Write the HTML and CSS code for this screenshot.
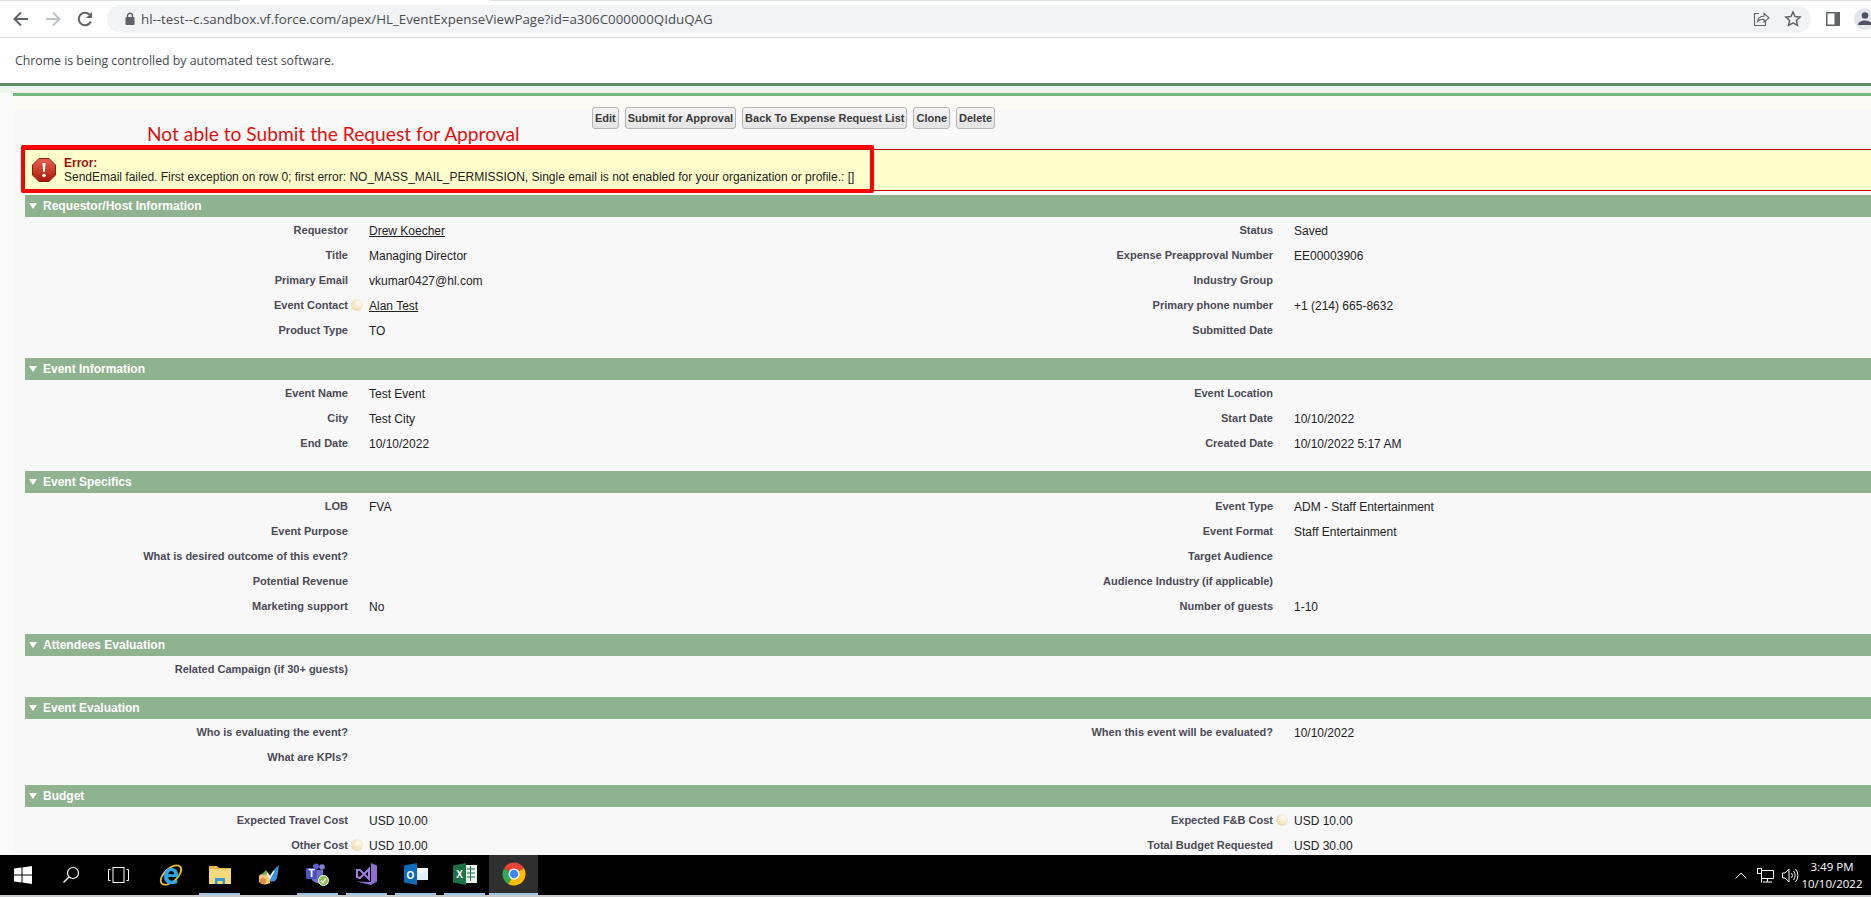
FILE: index.html
```html
<!DOCTYPE html>
<html lang="en">
<head>
    <meta charset="UTF-8">
    <title>HL_EventExpenseViewPage</title>
    <link rel="stylesheet" href="styles.css">
</head>
<body>
    <!-- browser toolbar -->
    <div class="toolbar">
        <div class="nav-btn">
            <svg width="18" height="18" viewBox="0 0 18 18"><path d="M16 9H3M9 2.5L2.5 9 9 15.500" fill="none" stroke="#5f6368" stroke-width="2"/></svg>
        </div>
        <div class="nav-btn">
            <svg width="18" height="18" viewBox="0 0 18 18"><path d="M2 9h13M9 2.500L15.500 9 9 15.500" fill="none" stroke="#bdc1c6" stroke-width="2"/></svg>
        </div>
        <div class="nav-btn">
            <svg width="18" height="18" viewBox="0 0 18 18"><path d="M14.800 11.500A6.300 6.300 0 1 1 13.500 4.500" fill="none" stroke="#5f6368" stroke-width="2"/><path d="M16 2v6h-6z" fill="#5f6368"/></svg>
        </div>
        <div class="omnibox">
            <svg class="lock" width="10" height="13" viewBox="0 0 10 13"><path d="M2.500 6V3.800a2.500 2.500 0 0 1 5 0V6" fill="none" stroke="#5f6368" stroke-width="1.400"/><rect x="0.500" y="5" width="9" height="8" rx="1" fill="#5f6368"/></svg>
            <span class="url">hl--test--c.sandbox.vf.force.com/apex/HL_EventExpenseViewPage?id=a306C000000QIduQAG</span>
            <svg class="omni-icon" width="18" height="18" viewBox="0 0 18 18"><path d="M7 3.500H2.500v12h11V11" fill="none" stroke="#5f6368" stroke-width="1.100"/><path d="M5.500 11.500c.5-3.500 3-5.300 6.500-5.300V3.500l5 4.300-5 4.200V9.300c-2.800 0-5 .5-6.500 2.200z" fill="none" stroke="#5f6368" stroke-width="1.100"/></svg>
            <svg class="omni-icon" width="18" height="18" viewBox="0 0 18 18"><path d="M9 2l2.100 4.600 5 .5-3.700 3.300 1 4.900L9 12.800l-4.400 2.500 1-4.900L1.900 7.100l5-.5z" fill="none" stroke="#5f6368" stroke-width="1.500"/></svg>
        </div>
        <div class="nav-btn panel-btn">
            <svg width="14" height="14" viewBox="0 0 14 14"><rect width="14" height="14" fill="#5f6368"/><rect x="1.500" y="1.500" width="7" height="11" fill="#fff"/></svg>
        </div>
        <div class="avatar">
            <svg width="22" height="22" viewBox="0 0 22 22"><circle cx="11" cy="7.500" r="3.300" fill="#4d5362"/><path d="M4 17c0-3 3.500-4.500 7-4.500s7 1.500 7 4.500z" fill="#4d5362"/></svg>
        </div>
    </div>

    <div class="infobar">Chrome is being controlled by automated test software.</div>

    <div class="page">
        <div class="top-line"></div>
        <div class="content">
            <div class="inner-line"></div>

            <div class="btn-row">
                <button class="btn">Edit</button>
                <button class="btn">Submit for Approval</button>
                <button class="btn">Back To Expense Request List</button>
                <button class="btn">Clone</button>
                <button class="btn">Delete</button>
            </div>

            <div class="error-msg">
                <svg class="error-icon" width="24" height="24" viewBox="0 0 24 24">
                    <defs>
                        <linearGradient id="errGrad" x1="0" y1="0" x2="0" y2="1">
                            <stop offset="0" stop-color="#e8604c"/>
                            <stop offset="1" stop-color="#a81806"/>
                        </linearGradient>
                    </defs>
                    <path d="M7 0.500h10l6.500 6.500v10L17 23.500H7L0.500 17V7z" fill="url(#errGrad)" stroke="#8f1a0c"/>
                    <path d="M10.500 5h3l-.7 9h-1.600z" fill="#fff"/>
                    <circle cx="12" cy="17.500" r="1.700" fill="#fff"/>
                </svg>
                <div>
                    <div class="error-title">Error:</div>
                    <div class="error-text">SendEmail failed. First exception on row 0; first error: NO_MASS_MAIL_PERMISSION, Single email is not enabled for your organization or profile.: []</div>
                </div>
            </div>

            <div class="section">
                <h3 class="section-head">Requestor/Host Information</h3>
                <div class="fields">
                    <div class="lbl">Requestor</div><div class="hlp"></div><div class="val"><a class="link">Drew Koecher</a></div>
                    <div class="lbl">Status</div><div class="hlp"></div><div class="val">Saved</div>
                    <div class="lbl">Title</div><div class="hlp"></div><div class="val">Managing Director</div>
                    <div class="lbl">Expense Preapproval Number</div><div class="hlp"></div><div class="val">EE00003906</div>
                    <div class="lbl">Primary Email</div><div class="hlp"></div><div class="val">vkumar0427@hl.com</div>
                    <div class="lbl">Industry Group</div><div class="hlp"></div><div class="val"></div>
                    <div class="lbl">Event Contact</div><div class="hlp"><span class="orb"></span></div><div class="val"><a class="link">Alan Test</a></div>
                    <div class="lbl">Primary phone number</div><div class="hlp"></div><div class="val">+1 (214) 665-8632</div>
                    <div class="lbl">Product Type</div><div class="hlp"></div><div class="val">TO</div>
                    <div class="lbl">Submitted Date</div><div class="hlp"></div><div class="val"></div>
                </div>
            </div>

            <div class="section">
                <h3 class="section-head">Event Information</h3>
                <div class="fields">
                    <div class="lbl">Event Name</div><div class="hlp"></div><div class="val">Test Event</div>
                    <div class="lbl">Event Location</div><div class="hlp"></div><div class="val"></div>
                    <div class="lbl">City</div><div class="hlp"></div><div class="val">Test City</div>
                    <div class="lbl">Start Date</div><div class="hlp"></div><div class="val">10/10/2022</div>
                    <div class="lbl">End Date</div><div class="hlp"></div><div class="val">10/10/2022</div>
                    <div class="lbl">Created Date</div><div class="hlp"></div><div class="val">10/10/2022 5:17 AM</div>
                </div>
            </div>

            <div class="section">
                <h3 class="section-head">Event Specifics</h3>
                <div class="fields">
                    <div class="lbl">LOB</div><div class="hlp"></div><div class="val">FVA</div>
                    <div class="lbl">Event Type</div><div class="hlp"></div><div class="val">ADM - Staff Entertainment</div>
                    <div class="lbl">Event Purpose</div><div class="hlp"></div><div class="val"></div>
                    <div class="lbl">Event Format</div><div class="hlp"></div><div class="val">Staff Entertainment</div>
                    <div class="lbl">What is desired outcome of this event?</div><div class="hlp"></div><div class="val"></div>
                    <div class="lbl">Target Audience</div><div class="hlp"></div><div class="val"></div>
                    <div class="lbl">Potential Revenue</div><div class="hlp"></div><div class="val"></div>
                    <div class="lbl">Audience Industry (if applicable)</div><div class="hlp"></div><div class="val"></div>
                    <div class="lbl">Marketing support</div><div class="hlp"></div><div class="val">No</div>
                    <div class="lbl">Number of guests</div><div class="hlp"></div><div class="val">1-10</div>
                </div>
            </div>

            <div class="section">
                <h3 class="section-head">Attendees Evaluation</h3>
                <div class="fields">
                    <div class="lbl">Related Campaign (if 30+ guests)</div><div class="hlp"></div><div class="val"></div>
                </div>
            </div>

            <div class="section">
                <h3 class="section-head">Event Evaluation</h3>
                <div class="fields">
                    <div class="lbl">Who is evaluating the event?</div><div class="hlp"></div><div class="val"></div>
                    <div class="lbl">When this event will be evaluated?</div><div class="hlp"></div><div class="val">10/10/2022</div>
                    <div class="lbl">What are KPIs?</div><div class="hlp"></div><div class="val"></div>
                </div>
            </div>

            <div class="section">
                <h3 class="section-head">Budget</h3>
                <div class="fields">
                    <div class="lbl">Expected Travel Cost</div><div class="hlp"></div><div class="val">USD 10.00</div>
                    <div class="lbl">Expected F&amp;B Cost</div><div class="hlp"><span class="orb"></span></div><div class="val">USD 10.00</div>
                    <div class="lbl">Other Cost</div><div class="hlp"><span class="orb"></span></div><div class="val">USD 10.00</div>
                    <div class="lbl">Total Budget Requested</div><div class="hlp"></div><div class="val">USD 30.00</div>
                </div>
            </div>
        </div>

        <!-- annotation drawn on top of the screenshot -->
        <div class="note">Not able to Submit the Request for Approval</div>
        <div class="note-box"></div>
    </div>

    <div class="taskbar">
        <div class="task sys">
            <svg width="18" height="18" viewBox="0 0 18 18"><path d="M0 2.600L7.500 1.500v7H0zM8.500 1.400L18 0v8.500H8.500zM0 9.500h7.500v7L0 15.400zM8.500 9.500H18V18l-9.500-1.400z" fill="#fff"/></svg>
        </div>
        <div class="task sys">
            <svg width="18" height="18" viewBox="0 0 18 18"><circle cx="11" cy="7" r="5.500" fill="none" stroke="#fff" stroke-width="1.200"/><path d="M7 11L1.500 16.500" stroke="#fff" stroke-width="1.400"/></svg>
        </div>
        <div class="task sys">
            <svg width="21" height="16" viewBox="0 0 21 16"><rect x="5" y="0.500" width="11" height="15" fill="none" stroke="#fff"/><path d="M2.500 2.500H.5v11h2M18.500 2.500h2v11h-2" fill="none" stroke="#fff"/></svg>
        </div>
        <div class="task first-app">
            <svg width="40" height="40" viewBox="0 0 40 40"><ellipse cx="20" cy="20" rx="12.500" ry="6.500" transform="rotate(-42 20 20)" fill="none" stroke="#e8c13c" stroke-width="1.800"/><text x="20" y="29" text-anchor="middle" class="ie-e">e</text></svg>
        </div>
        <div class="task open">
            <svg width="22" height="20" viewBox="0 0 22 20"><path d="M0 2h8l2 2h12v4H0z" fill="#e8b93e"/><rect y="5" width="22" height="15" fill="#f6d77c"/><path d="M6 20v-6h10v6h-2.500v-3h-5v3z" fill="#2f9bd6"/></svg>
        </div>
        <div class="task">
            <svg width="22" height="22" viewBox="0 0 22 22"><path d="M1 12c2-3 8-3 11-1v8c-3 2-8 2-11-1z" fill="#efc877"/><path d="M3 11l5-5 3 4z" fill="#6fae3f"/><path d="M12 11c2-3 5-7 9-10-1 5-1 11-3 15-2 2-5 2-6 1z" fill="#3d8fd8"/><path d="M9 9l3 5 4-7" fill="none" stroke="#fff" stroke-width="1.400"/><circle cx="5" cy="17" r="3" fill="#e58a3a"/></svg>
        </div>
        <div class="task open">
            <svg width="23" height="23" viewBox="0 0 23 23"><circle cx="16" cy="4" r="2.800" fill="#7b83d1"/><circle cx="10" cy="3.500" r="3" fill="#5b5fc7"/><path d="M5 7h12v9c0 3-3 5-6 4-3-.5-6-3-6-6z" fill="#6c70c9"/><rect y="5" width="11" height="11" rx="1" fill="#4b53bc"/><text x="5.500" y="14" text-anchor="middle" class="tile-letter">T</text><circle cx="17.500" cy="17.500" r="5" fill="#8cbf4d" stroke="#fff"/><path d="M15 17.500l2 2 3-4" fill="none" stroke="#fff" stroke-width="1.300"/></svg>
        </div>
        <div class="task open">
            <svg width="24" height="24" viewBox="0 0 24 24"><path d="M16 1l6 2.500v16L16 23 1 19.500 16 20z" fill="#8f6fd1"/><path d="M2 8v7l3 1 9-9v10L5 8z" fill="none" stroke="#9e80dc" stroke-width="2"/></svg>
        </div>
        <div class="task open">
            <svg width="24" height="22" viewBox="0 0 24 22"><rect x="10" y="5" width="14" height="12" fill="#dff0fb"/><path d="M10 5h14l-7 6z" fill="#fff"/><path d="M0 2.500L13 0v22L0 19.500z" fill="#0f6cbd"/><text x="6.500" y="15.500" text-anchor="middle" class="tile-letter">O</text></svg>
        </div>
        <div class="task open">
            <svg width="24" height="22" viewBox="0 0 24 22"><rect x="11" y="2" width="13" height="18" fill="#e7f2ea"/><path d="M14 6h8M14 10h8M14 14h8M17.500 3v15" stroke="#217346"/><path d="M0 2.500L13 0v22L0 19.500z" fill="#1e7145"/><text x="6.500" y="15" text-anchor="middle" class="tile-letter">X</text></svg>
        </div>
        <div class="task open active">
            <svg width="24" height="24" viewBox="0 0 48 48">
                <path d="M24 24L12.500 44A23 23 0 0 1 4.100 12.500z" fill="#34a853"/>
                <path d="M24 1a23 23 0 0 1 20 11.500L24 24 4.100 12.500A23 23 0 0 1 24 1z" fill="#ea4335"/>
                <path d="M44 12.500A23 23 0 0 1 12.500 44L24 24z" fill="#fbbc04"/>
                <circle cx="24" cy="24" r="11" fill="#fff"/>
                <circle cx="24" cy="24" r="8.500" fill="#4285f4"/>
            </svg>
        </div>
        <div class="tray">
            <svg width="12" height="7" viewBox="0 0 12 7"><path d="M.5 6.500L6 1l5.500 5.500" fill="none" stroke="#fff"/></svg>
            <svg class="tray-net" width="17" height="15" viewBox="0 0 17 15"><path d="M4.500 2.500h12v8h-12M10.500 10.500v3.500M6 14h9M4.500 5.500v9" fill="none" stroke="#fff"/><rect x="0.500" y="0.500" width="4" height="5" fill="#000" stroke="#fff"/></svg>
            <svg class="tray-vol" width="17" height="15" viewBox="0 0 17 15"><path d="M.5 5h2.500l4-4v13l-4-4H.5z" fill="none" stroke="#fff"/><path d="M9.500 5a4 4 0 0 1 0 5M11.500 3a7 7 0 0 1 0 9M13.500 1a10 10 0 0 1 0 13" fill="none" stroke="#fff"/></svg>
            <div class="clock">
                <div>3:49 PM</div>
                <div>10/10/2022</div>
            </div>
        </div>
    </div>
    <div class="bottom-strip"></div>
</body>
</html>
```

FILE: styles.css
```css
html, body {
    margin: 0;
    height: 100%;
    overflow: hidden;
}
body {
    width: 1871px;
    height: 897px;
    display: flex;
    flex-direction: column;
    font-family: "Liberation Sans", Arial, sans-serif;
    font-size: 12px;
    color: #222;
    background-color: #fff;
}

/* browser chrome */
.toolbar {
    height: 37px;
    flex-shrink: 0;
    display: flex;
    align-items: center;
    padding-left: 5px;
    border-bottom: 1px solid #d8d9db;
    background: linear-gradient(to right, #dee1e6 240px, #fff 240px, #fff 490px, #dee1e6 490px) top / 100% 1px no-repeat #fff;
    overflow: hidden;
}
.nav-btn {
    width: 32px;
    height: 28px;
    flex-shrink: 0;
    display: flex;
    align-items: center;
    justify-content: center;
}
.omnibox {
    flex: 1;
    height: 28px;
    margin-left: 6px;
    padding: 0 9px 0 18px;
    display: flex;
    align-items: center;
    background-color: #f1f3f4;
    border-radius: 14px;
}
.url {
    flex: 1;
    margin-left: 6px;
    font-family: "Open Sans", sans-serif;
    font-size: 13.330px;
    color: #4a4d52;
    white-space: nowrap;
}
.omni-icon {
    margin-left: 14px;
}
.panel-btn {
    margin-left: 6px;
}
.avatar {
    width: 22px;
    height: 22px;
    margin-left: 5px;
    margin-right: -5px;
    flex-shrink: 0;
    border-radius: 50%;
    background-color: #e3e5ea;
}
.infobar {
    height: 45px;
    flex-shrink: 0;
    padding-left: 15px;
    box-sizing: border-box;
    line-height: 45px;
    font-family: "Open Sans", sans-serif;
    font-size: 12.300px;
    color: #45484c;
}

/* salesforce page */
.page {
    flex: 1;
    position: relative;
    overflow: hidden;
    background: linear-gradient(#edf5ed 10px, #fafafa 10px);
}
.top-line {
    height: 3px;
    background-color: #5f8a63;
}
.content {
    margin-left: 13px;
    padding-top: 7px;
    background: linear-gradient(#edf5ed 10px, #fdf9f3 10px, #fdf9f3 24px, #f8f8f8 24px);
}
.inner-line {
    height: 3px;
    background-color: #74b77c;
}
.btn-row {
    display: flex;
    gap: 6px;
    margin: 11px 0 0 579px;
}
.btn {
    height: 22px;
    padding: 0 2px;
    border: 1px solid #b5b5b5;
    border-radius: 3px;
    background: linear-gradient(#f4f4f4, #e4e4e4);
    font-family: "Liberation Sans", Arial, sans-serif;
    font-size: 11px;
    font-weight: bold;
    color: #3a3a3a;
}
.error-msg {
    display: flex;
    align-items: center;
    height: 42px;
    margin: 20px 0 4px 12px;
    box-sizing: border-box;
    padding-left: 7px;
    border-top: 1px solid #c00;
    border-bottom: 1px solid #c00;
    background-color: #ffffcc;
}
.error-icon {
    margin-right: 8px;
    flex-shrink: 0;
}
.error-title {
    font-weight: bold;
    color: #a01010;
}
.error-text {
    line-height: 15px;
    color: #222;
}
.section {
    margin: 0 0 16px 12px;
}
.section-head {
    height: 22px;
    margin: 0;
    padding-left: 18px;
    position: relative;
    line-height: 22px;
    font-size: 12px;
    font-weight: bold;
    color: #fff;
    background-color: #8fb28f;
}
.section-head::before {
    content: "";
    position: absolute;
    left: 4px;
    top: 8px;
    border-left: 4px solid transparent;
    border-right: 4px solid transparent;
    border-top: 6px solid #fff;
}
.fields {
    display: grid;
    grid-template-columns: 323px 21px 330px 574px 21px 1fr;
    grid-auto-rows: 25px;
    align-items: center;
}
.lbl {
    text-align: right;
    font-size: 11px;
    font-weight: bold;
    color: #4a4a56;
}
.hlp {
    display: flex;
    align-items: center;
    padding-left: 3px;
}
.val {
    padding-top: 2px;
    color: #222;
}
.link {
    color: #222;
    text-decoration: underline;
}
.orb {
    width: 12px;
    height: 12px;
    border-radius: 50%;
    background: radial-gradient(circle at 60% 35%, #fffdf5, #efdcae 70%, #e6e0d0);
}

/* annotation */
.note {
    position: absolute;
    left: 147px;
    top: 39px;
    font-family: "Lato", sans-serif;
    font-size: 19.200px;
    color: #e01010;
    white-space: nowrap;
}
.note-box {
    position: absolute;
    left: 21px;
    top: 62px;
    width: 853px;
    height: 48px;
    box-sizing: border-box;
    border: 4px solid #f00;
    border-radius: 2px;
}

/* windows taskbar */
.taskbar {
    height: 40px;
    flex-shrink: 0;
    display: flex;
    background-color: #000;
}
.task {
    width: 49px;
    display: flex;
    align-items: center;
    justify-content: center;
    box-sizing: border-box;
}
.sys {
    width: 48px;
    padding-right: 3px;
}
.first-app {
    margin-left: 2px;
}
.open {
    border-bottom: 2px solid #9dc4e0;
    margin: 0 4px;
    width: 41px;
}
.active {
    width: 49px;
    margin: 0;
    background-color: #2f2f2f;
}
.ie-e {
    font-family: "Open Sans", sans-serif;
    font-size: 28px;
    font-weight: bold;
    fill: #2ea6e6;
}
.tile-letter {
    font-family: "Liberation Sans", sans-serif;
    font-size: 10px;
    font-weight: bold;
    fill: #fff;
}
.tray {
    margin-left: auto;
    display: flex;
    align-items: center;
    padding-right: 6px;
}
.tray-net {
    margin-left: 10px;
}
.tray-vol {
    margin-left: 8px;
}
.clock {
    width: 66px;
    text-align: center;
    font-family: "Open Sans", sans-serif;
    font-size: 11.500px;
    line-height: 17px;
    color: #fff;
}
.bottom-strip {
    height: 2px;
    flex-shrink: 0;
    background-color: #c8c9ca;
}
```
